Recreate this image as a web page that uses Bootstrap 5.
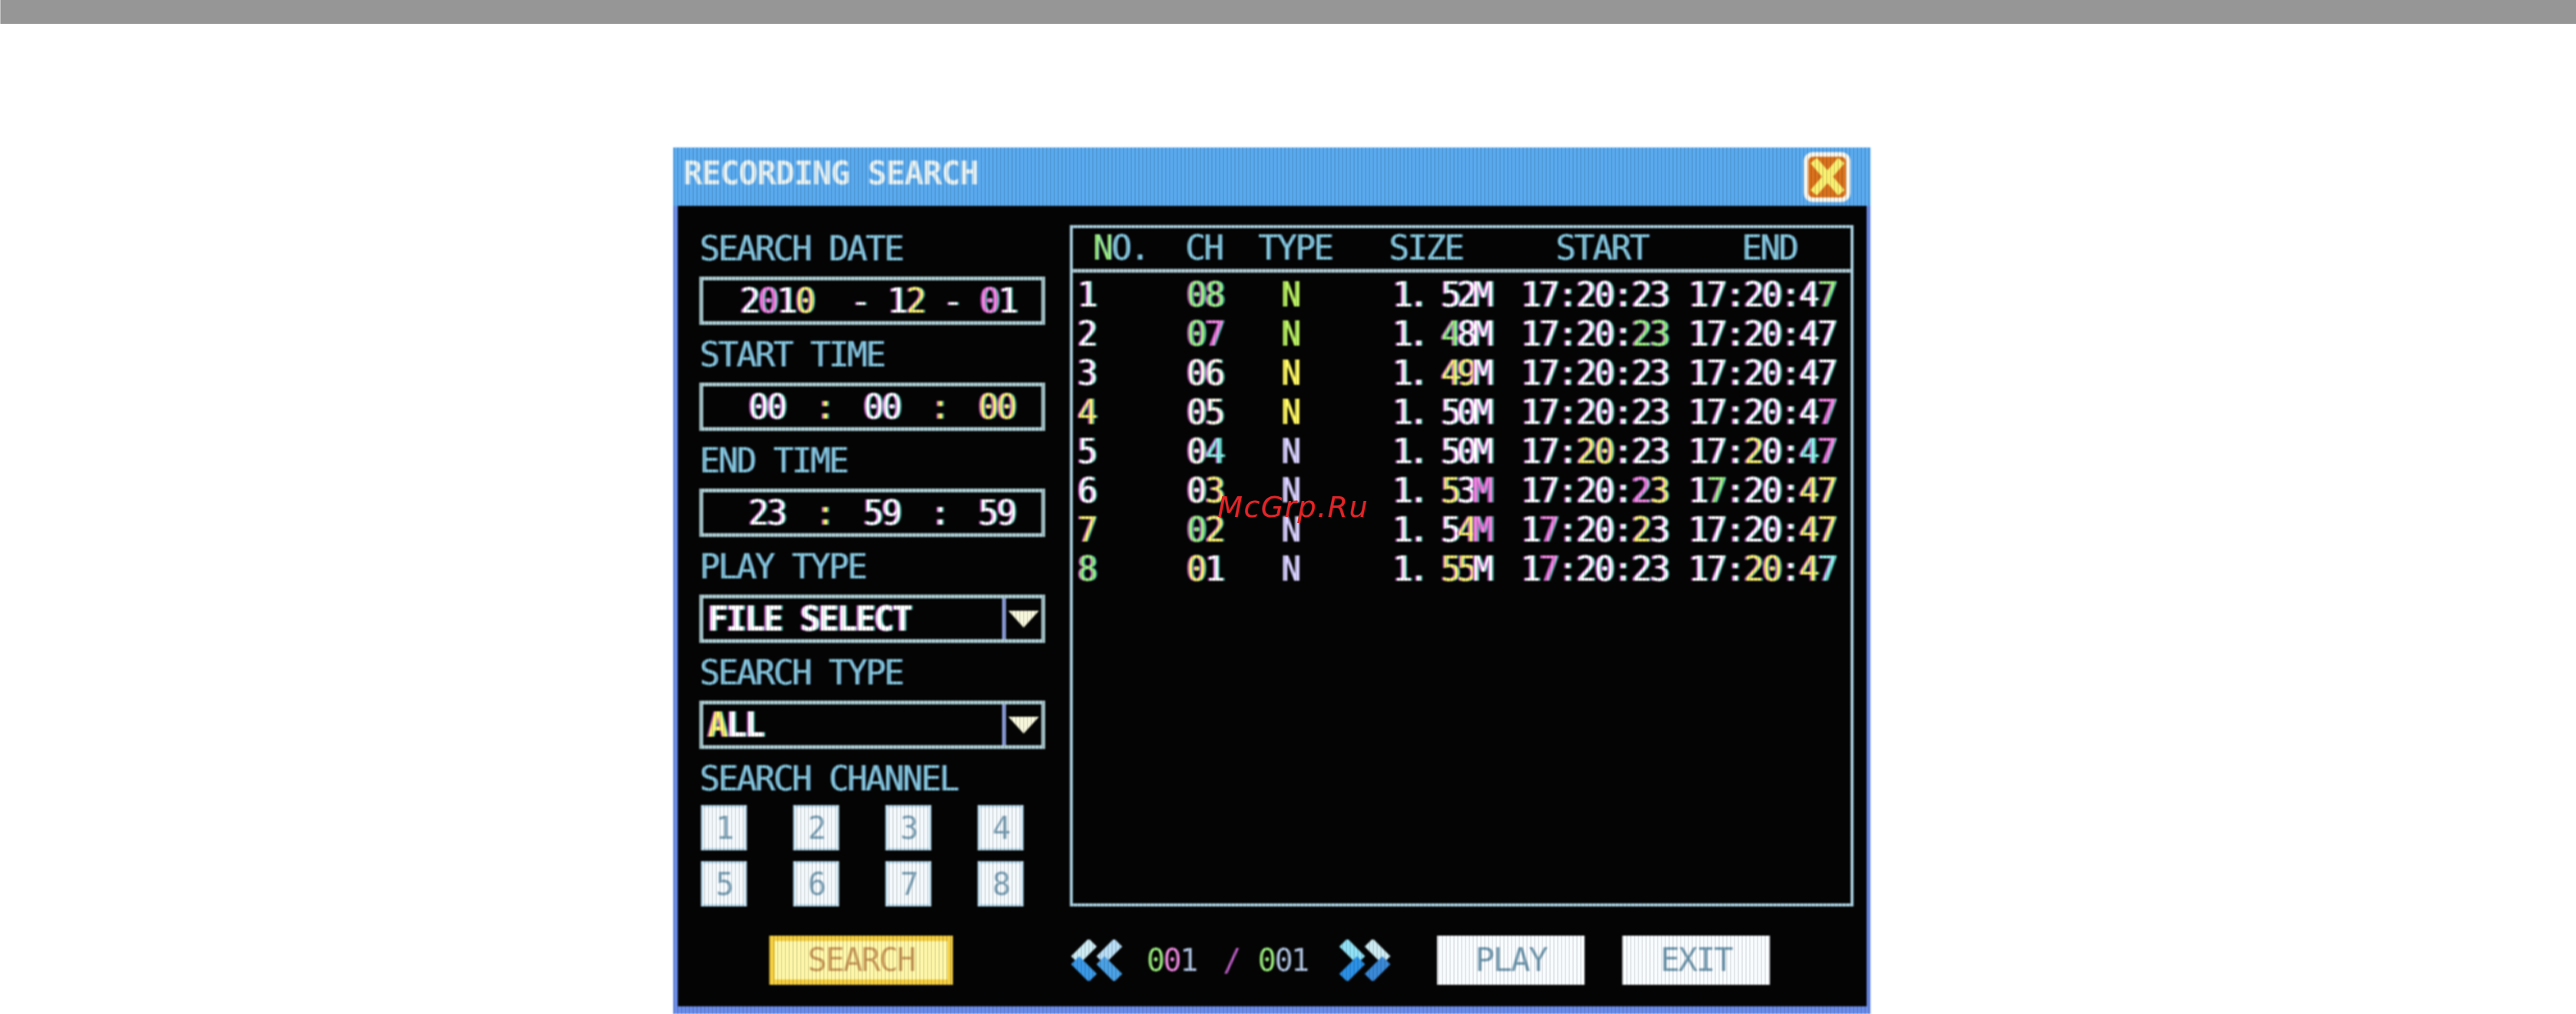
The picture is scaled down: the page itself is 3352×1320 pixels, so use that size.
<!DOCTYPE html>
<html lang="en">
<head>
<meta charset="utf-8">
<title>Recording search</title>
<link href="https://cdn.jsdelivr.net/npm/bootstrap@5.3.0/dist/css/bootstrap.min.css" rel="stylesheet">
<style>
html,body{height:1320px;overflow:hidden;background:#fff;}
.top-strip{height:31px;background:#969696;border-left:1px solid #c4c4c4;}
.stage{padding:161px 0 0 876px;position:relative;}
.dvr{width:1558px;height:1128px;background:#6a8ce8;padding:0 5px 10px 6px;position:relative;
  font-family:"DejaVu Sans Mono","Liberation Mono",monospace;font-size:44px;line-height:1;font-weight:400;
  letter-spacing:-2.5px;filter:blur(1px);}
.dvr-head{height:76px;background:#59a9ee;margin:0 -5px 0 -6px;padding:0 26px 8px 13px;}
.dvr-title{color:#e4f1f4;font-size:42px;letter-spacing:-1.3px;font-weight:700;}
.close-x{width:61px;height:65px;border-radius:12px;background:#d8701c;border:6px solid #f6f4ea;margin-top:8px;}
.dvr-body{background:#040404;height:1042px;}
.main-row{height:912px;padding:25px 13px 0 28px;gap:32px;}
.left-col{width:450px;padding-top:15px;flex:none;}
.lbl{height:32px;margin-bottom:20px;color:#84c6dc;white-space:nowrap;line-height:32px;text-shadow:1px 0 #6ea0d8;}
.lbl-ch{margin-bottom:18px;}
.val-box{height:63px;margin-bottom:23px;border:5px solid #a9c9cf;color:#fff;position:relative;white-space:pre;
  text-shadow:-2px 0 #c050c0,2px 0 #40b0a0;}
.val-date{padding-left:48px;}
.val-time{padding:0 34px 0 59px;}
.val-box.sel{padding-left:6px;font-size:44px;}
.val-bold{font-weight:700;}
.drop-cell{width:51px;height:100%;border-left:5px solid #8e9fe0;margin-left:auto;}
.tri{width:0;height:0;border-left:20px solid transparent;border-right:20px solid transparent;border-top:22px solid #f6f6dc;margin:0 auto;}
.chip-grid{display:grid;grid-template-columns:repeat(4,60px);column-gap:60px;row-gap:14px;padding-left:2px;}
.chip{height:59px;background:#f3f8fc;color:#7a9fb4;font-size:40px;box-shadow:inset 0 0 0 3px #b9d9ea;}
.list-panel{width:1020px;height:887px;border:4px solid #a8cddd;flex:none;position:relative;}
.list-head,.list-row{display:grid;align-items:center;white-space:nowrap;}
.list-head{height:58px;border-bottom:5px solid #a9c3cc;grid-template-columns:120px 95px 170px 217px 242px auto;padding:0 0 2px 26px;color:#84c8dc;text-shadow:1px 0 #6ea0d8;}
.list-row{height:51px;grid-template-columns:142px 123px 145px 167px 218px auto;padding-left:6px;color:#fff;
  text-shadow:-2px 0 #c050c0,2px 0 #40b0a0;}
.list-rows{padding-top:3px;}
.ch-col{color:#fdfde8;}
.nn{color:#fff860;font-weight:700;text-shadow:none;}
.nn-g{color:#b8f060;}
.nn-p{color:#d8d0ff;}
.sz{letter-spacing:-5.5px;}
.c-g{color:#9cf080;}
.c-m{color:#f088e0;}
.c-y{color:#f8f070;}
.c-c{color:#90f0e8;}
.bottom-row{height:130px;padding:38px 0 0 119px;}
.act-btn{height:64px;border:0;border-radius:0;font-family:inherit;font-size:42px;font-weight:400;letter-spacing:-2px;padding:0;line-height:1;
  background:#f9fcff;color:#6f97ad;width:192px;}
.act-btn:hover{background:#f9fcff;color:#6f97ad;}
.act-search{width:239px;background:#fdf6a8;border:7px solid #f3cd3f;color:#c99b5a;margin-right:152px;}
.act-search:hover{background:#fdf6a8;color:#c99b5a;}
.pager{color:#b2c6e4;font-size:40px;width:419px;height:64px;}
.pg-a{width:69px;height:54px;flex:none;}
.pg-num{width:66px;margin-left:31px;}
.pg-sl{width:28px;margin-left:34px;color:#c060c8;}
.pg-num2{width:66px;margin-left:18px;}
.pg-b{margin-left:40px;}
.act-play{margin-left:59px;}
.act-exit{margin-left:49px;}
.scan{position:absolute;left:876px;top:192px;width:1558px;height:1128px;pointer-events:none;
  background:repeating-linear-gradient(90deg,rgba(0,0,0,.08) 0 2px,transparent 2px 5px);}
.wm{position:absolute;left:1584px;top:638px;margin:0;color:#e22428;font-family:"DejaVu Sans",sans-serif;font-style:italic;font-size:38px;line-height:44px;letter-spacing:1.4px;font-weight:400;white-space:nowrap;}
</style>
</head>
<body>
<div class="top-strip"></div>
<div class="stage">
  <div class="dvr">
    <div class="dvr-head d-flex align-items-center justify-content-between">
      <span class="dvr-title">RECORDING SEARCH</span>
      <div class="close-x d-flex align-items-center justify-content-center">
        <svg width="46" height="50" viewBox="0 0 46 50"><path d="M5 4 L41 46 M41 4 L5 46" stroke="#f8ee70" stroke-width="11" fill="none"/></svg>
      </div>
    </div>
    <div class="dvr-body">
      <div class="main-row d-flex">
        <div class="left-col">
          <div class="lbl">SEARCH DATE</div>
          <div class="val-box val-date d-flex align-items-center">2<span class="c-m">0</span>1<span class="c-y">0</span>  - 1<span class="c-y">2</span> - <span class="c-m">0</span>1</div>
          <div class="lbl">START TIME</div>
          <div class="val-box val-time d-flex align-items-center justify-content-between"><span>00</span><span class="c-y">:</span><span>00</span><span class="c-y">:</span><span class="c-y">00</span></div>
          <div class="lbl">END TIME</div>
          <div class="val-box val-time d-flex align-items-center justify-content-between"><span>23</span><span class="c-y">:</span><span>59</span><span>:</span><span>59</span></div>
          <div class="lbl">PLAY TYPE</div>
          <div class="val-box val-bold sel d-flex align-items-center">FILE SELECT<div class="drop-cell d-flex align-items-center"><div class="tri"></div></div></div>
          <div class="lbl">SEARCH TYPE</div>
          <div class="val-box val-bold sel d-flex align-items-center"><span class="c-y">A</span>LL<div class="drop-cell d-flex align-items-center"><div class="tri"></div></div></div>
          <div class="lbl lbl-ch">SEARCH CHANNEL</div>
          <div class="chip-grid">
            <div class="chip d-flex align-items-center justify-content-center">1</div>
            <div class="chip d-flex align-items-center justify-content-center">2</div>
            <div class="chip d-flex align-items-center justify-content-center">3</div>
            <div class="chip d-flex align-items-center justify-content-center">4</div>
            <div class="chip d-flex align-items-center justify-content-center">5</div>
            <div class="chip d-flex align-items-center justify-content-center">6</div>
            <div class="chip d-flex align-items-center justify-content-center">7</div>
            <div class="chip d-flex align-items-center justify-content-center">8</div>
          </div>
        </div>
        <div class="list-panel">
          <div class="list-head"><span><span class="c-g">N</span>O.</span><span>CH</span><span>TYPE</span><span>SIZE</span><span>START</span><span>END</span></div>
          <div class="list-rows">
            <div class="list-row"><span>1</span><span class="c-g">08</span><span class="nn nn-g">N</span><span class="sz">1. 52M</span><span>17:20:23</span><span>17:20:4<span class="c-g">7</span></span></div>
            <div class="list-row"><span>2</span><span><span class="c-g">0</span><span class="c-m">7</span></span><span class="nn nn-g">N</span><span class="sz">1. <span class="c-g">4</span>8M</span><span>17:20:<span class="c-g">23</span></span><span>17:20:47</span></div>
            <div class="list-row"><span>3</span><span class="ch-col">06</span><span class="nn">N</span><span class="sz">1. <span class="c-y">49</span>M</span><span>17:20:23</span><span>17:20:47</span></div>
            <div class="list-row"><span class="c-y">4</span><span class="ch-col">05</span><span class="nn">N</span><span class="sz">1. 50M</span><span>17:20:23</span><span>17:20:4<span class="c-m">7</span></span></div>
            <div class="list-row"><span>5</span><span><span class="ch-col">0</span><span class="c-c">4</span></span><span class="nn nn-p">N</span><span class="sz">1. 50M</span><span>17:<span class="c-y">20</span>:23</span><span>17:<span class="c-y">2</span>0:<span class="c-c">4</span><span class="c-m">7</span></span></div>
            <div class="list-row"><span>6</span><span><span class="ch-col">0</span><span class="c-y">3</span></span><span class="nn nn-p">N</span><span class="sz">1. <span class="c-y">5</span>3<span class="c-m">M</span></span><span>17:20:<span class="c-m">2</span><span class="c-y">3</span></span><span>1<span class="c-g">7</span>:20:<span class="c-y">47</span></span></div>
            <div class="list-row"><span class="c-y">7</span><span><span class="c-g">0</span><span class="c-y">2</span></span><span class="nn nn-p">N</span><span class="sz">1. 5<span class="c-y">4</span><span class="c-m">M</span></span><span>1<span class="c-m">7</span>:20:<span class="c-y">2</span>3</span><span>17:20:<span class="c-y">47</span></span></div>
            <div class="list-row"><span class="c-g">8</span><span><span class="c-y">0</span>1</span><span class="nn nn-p">N</span><span class="sz">1. <span class="c-y">55</span>M</span><span>1<span class="c-m">7</span>:20:23</span><span>17:<span class="c-y">20</span>:<span class="c-y">4</span><span class="c-c">7</span></span></div>
          </div>
        </div>
      </div>
      <div class="bottom-row d-flex align-items-start">
        <button type="button" class="btn act-btn act-search">SEARCH</button>
        <div class="pager d-flex align-items-center">
          <svg class="pg-a" viewBox="0 0 69 54" fill="none" stroke-width="15"><path d="M30 4 L7 27" stroke="#cdeaf2"/><path d="M7 27 L30 50" stroke="#3a98e6"/><path d="M63 4 L40 27" stroke="#b8dcf4"/><path d="M40 27 L63 50" stroke="#4aa0e4"/></svg>
          <span class="pg-num"><span class="c-g">0</span><span class="c-m">0</span>1</span><span class="pg-sl">/</span><span class="pg-num2"><span class="c-g">0</span>01</span>
          <svg class="pg-a pg-b" viewBox="0 0 69 54" fill="none" stroke-width="15"><path d="M6 4 L29 27" stroke="#8fe0f4"/><path d="M29 27 L6 50" stroke="#2a90e6"/><path d="M39 4 L62 27" stroke="#cdeaf2"/><path d="M62 27 L39 50" stroke="#3a88d6"/></svg>
        </div>
        <button type="button" class="btn act-btn act-play">PLAY</button>
        <button type="button" class="btn act-btn act-exit">EXIT</button>
      </div>
    </div>
  </div>
</div>
<div class="scan"></div>
<p class="wm">McGrp.Ru</p>
<script src="https://cdn.jsdelivr.net/npm/bootstrap@5.3.0/dist/js/bootstrap.bundle.min.js"></script>
</body>
</html>
